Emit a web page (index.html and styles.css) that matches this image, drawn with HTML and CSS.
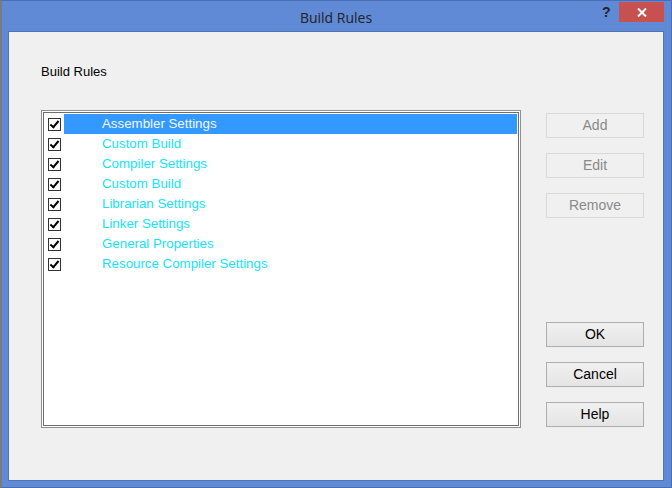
FILE: index.html
```html
<!DOCTYPE html>
<html>
<head>
<meta charset="utf-8">
<link rel="stylesheet" href="styles.css">
</head>
<body>
<div class="window">
  <div class="titlebar">
    <div class="title">Build Rules</div>
    <div class="help-q">?</div>
    <div class="close">
      <svg width="10" height="9" viewBox="0 0 10 9"><path d="M1 0.5 L9 8.5 M9 0.5 L1 8.5" stroke="#fff" stroke-width="2" fill="none"/></svg>
    </div>
  </div>
  <div class="client">
    <div class="label">Build Rules</div>
    <div class="main">
      <div class="listbox">
        <div class="row selected"><span class="check"></span><span class="item">Assembler Settings</span></div>
        <div class="row"><span class="check"></span><span class="item">Custom Build</span></div>
        <div class="row"><span class="check"></span><span class="item">Compiler Settings</span></div>
        <div class="row"><span class="check"></span><span class="item">Custom Build</span></div>
        <div class="row"><span class="check"></span><span class="item">Librarian Settings</span></div>
        <div class="row"><span class="check"></span><span class="item">Linker Settings</span></div>
        <div class="row"><span class="check"></span><span class="item">General Properties</span></div>
        <div class="row"><span class="check"></span><span class="item">Resource Compiler Settings</span></div>
      </div>
      <div class="buttons">
        <div class="group">
          <div class="btn disabled">Add</div>
          <div class="btn disabled">Edit</div>
          <div class="btn disabled">Remove</div>
        </div>
        <div class="group">
          <div class="btn">OK</div>
          <div class="btn">Cancel</div>
          <div class="btn">Help</div>
        </div>
      </div>
    </div>
  </div>
</div>
</body>
</html>
```
FILE: styles.css
```css
* { box-sizing: border-box; }
html, body { margin: 0; padding: 0; }
body {
  width: 672px;
  height: 488px;
  background: #7a7a7a;
  font-family: "Liberation Sans", Arial, sans-serif;
  overflow: hidden;
}
.window {
  width: 672px;
  height: 488px;
  background: #6089d6;
  border-top: 1px solid #4a6eb3;
  border-right: 1px solid #4a6eb3;
  border-bottom: 1px solid #4a6eb3;
  border-left: 2px solid #777b82;
  padding: 0 7px 6px 6px;
  display: flex;
  flex-direction: column;
}
.titlebar {
  height: 30px;
  position: relative;
  display: flex;
  align-items: center;
  justify-content: center;
}
.title {
  font-family: "Open Sans", "Noto Sans", sans-serif;
  font-size: 14px;
  color: #222;
  margin-top: 2px;
}
.help-q {
  position: absolute;
  left: 594px;
  top: 3px;
  font-family: "Liberation Sans", Arial, sans-serif;
  font-weight: bold;
  font-size: 14px;
  color: #222;
}
.close {
  position: absolute;
  left: 611px;
  top: 1px;
  width: 45px;
  height: 20px;
  background: #c75050;
  display: flex;
  align-items: center;
  justify-content: center;
}
.client {
  flex: 1;
  background: #f0f0f0;
  border: 1px solid #4f74b9;
  padding: 32px 19px 0 32px;
}
.label {
  font-size: 13px;
  line-height: 16px;
  color: #000;
  height: 16px;
}
.main {
  display: flex;
  margin-top: 30px;
}
.listbox {
  width: 480px;
  height: 318px;
  background: #fff;
  border: 1px solid #8e8f8f;
  box-shadow: inset 0 0 0 1px #ffffff, inset 0 0 0 2px #6e6e6e;
  padding: 3px 3px 3px 2px;
}
.row {
  height: 20px;
  display: flex;
  align-items: center;
  font-size: 13.3px;
}
.check {
  width: 13px;
  height: 13px;
  border: 1px solid #333;
  background: #fff;
  margin-left: 4px;
  margin-right: 3px;
  position: relative;
  flex: none;
}
.check::after {
  content: "";
  position: absolute;
  left: 3px;
  top: 0px;
  width: 3px;
  height: 7px;
  border-right: 2.5px solid #000;
  border-bottom: 2.5px solid #000;
  transform: rotate(40deg);
}
.item {
  flex: 1;
  height: 20px;
  line-height: 20px;
  padding-left: 38px;
  color: #13e4fb;
}
.selected .item {
  background: #3399ff;
  color: #f2f6ff;
}
.buttons {
  margin-left: 25px;
  width: 98px;
  height: 318px;
  padding: 3px 0 1px 0;
  display: flex;
  flex-direction: column;
  justify-content: space-between;
}
.group {
  display: flex;
  flex-direction: column;
  gap: 15px;
}
.btn {
  height: 25px;
  border: 1px solid #adadad;
  background: linear-gradient(#f0f0f0, #e5e5e5);
  font-size: 14px;
  line-height: 23px;
  text-align: center;
  color: #000;
}
.btn.disabled {
  background: #f0f0f0;
  border-color: #d9d9d9;
  color: #8a8a8a;
}
```
